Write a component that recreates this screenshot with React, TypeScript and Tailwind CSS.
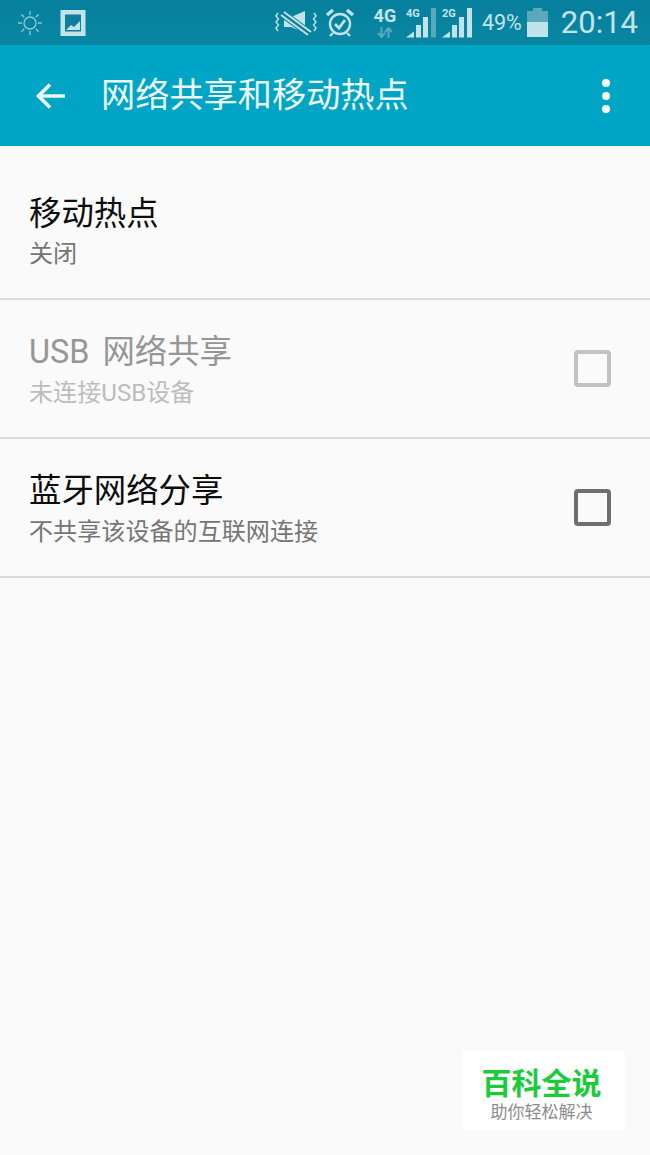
const cjk = "font-['Roboto','Noto_Sans_CJK_SC',sans-serif]";

function Sun() {
  return (
    <svg width="30" height="30" viewBox="0 0 30 30" fill="none" stroke="#8fcbd8" strokeWidth="1.3" strokeLinecap="round">
      <circle cx="15" cy="15" r="6" />
      <path d="M15 3.500v3M15 23.500v3M3.500 15h3M23.500 15h3M6.800 6.800l2 2M21.200 21.200l2 2M6.800 23.200l2-2M21.200 8.800l2-2" />
    </svg>
  );
}

function Picture() {
  return (
    <svg width="26" height="28" viewBox="0 0 26 28">
      <rect x="0.500" y="1" width="25" height="26" fill="#c3e3ea" />
      <rect x="5" y="5.500" width="16" height="17" fill="#0b7f9b" />
      <path d="M6 21l5-5 3 2 6-6v9z" fill="#c3e3ea" />
    </svg>
  );
}

function Mute() {
  return (
    <svg width="44" height="28" viewBox="0 0 44 28" fill="none">
      <path d="M4 4l-2 3 2.500 3-2.500 3 2.500 3-2.500 3 2 3M40 4l2 3-2.500 3 2.500 3-2.500 3 2.500 3-2 3" stroke="#c3e3ea" strokeWidth="1.400" />
      <path d="M10 8h7l14-6v22l-14-6h-7z" fill="#c3e3ea" />
      <path d="M9 5l27 20" stroke="#0b7f9b" strokeWidth="8" />
      <path d="M10 3l27 20M7 6l27 20" stroke="#c3e3ea" strokeWidth="2" />
    </svg>
  );
}

function Alarm() {
  return (
    <svg width="30" height="32" viewBox="0 0 30 32" fill="none" stroke="#c3e3ea" strokeWidth="2.400">
      <circle cx="15" cy="17" r="10" />
      <path d="M10 17l4 4 6-8" strokeWidth="2.800" />
      <path d="M2 8l6-5M28 8l-6-5" strokeWidth="3.400" />
      <path d="M8 26l-3 3M22 26l3 3" />
    </svg>
  );
}

function Signal({ dim }: { dim?: boolean }) {
  return (
    <svg width="30" height="30" viewBox="0 0 30 30">
      <path d="M0 29.500l8-6v6z" fill="#c3e3ea" />
      <rect x="10" y="17" width="5" height="12.500" fill="#c3e3ea" />
      <rect x="17" y="9" width="5" height="20.500" fill="#c3e3ea" />
      <rect x="25" y="0" width="5" height="29.500" fill={dim ? "#5aa8bc" : "#c3e3ea"} />
    </svg>
  );
}

function Arrows() {
  return (
    <svg width="16" height="11" viewBox="0 0 16 11" fill="none" stroke="#5aa8bc" strokeWidth="2">
      <path d="M4.500 0v9M1 6l3.500 4L8 6M11.500 11V2M8 5l3.500-4L15 5" />
    </svg>
  );
}

function Battery() {
  return (
    <svg width="21" height="29" viewBox="0 0 21 29">
      <rect x="6" y="0" width="9" height="4" fill="#5aa8bc" />
      <rect x="0" y="3" width="21" height="12" fill="#5aa8bc" />
      <rect x="0" y="14" width="21" height="15" fill="#c3e3ea" />
    </svg>
  );
}

function StatusBar() {
  return (
    <div className="flex h-[45px] items-center bg-gradient-to-b from-[#067f9c] to-[#0a87a3] pl-[15px] pr-[12px] text-[#c3e3ea]">
      <Sun />
      <div className="ml-[15px]"><Picture /></div>
      <div className="ml-auto"><Mute /></div>
      <div className="ml-[7px]"><Alarm /></div>
      <div className="ml-[17px] flex w-[26px] flex-col items-center">
        <span className="text-[18px] font-bold leading-[15px] font-['Roboto',sans-serif]">4G</span>
        <div className="mt-[4px] flex"><Arrows /></div>
      </div>
      <div className="relative ml-[8px] mt-[1px] h-[30px] w-[30px]">
        <Signal dim />
        <span className="absolute left-[0px] top-[0px] text-[11px] font-bold leading-[12px] font-['Roboto',sans-serif]">4G</span>
      </div>
      <div className="relative ml-[6px] mt-[1px] h-[30px] w-[30px]">
        <Signal />
        <span className="absolute left-[0px] top-[0px] text-[11px] font-bold leading-[12px] font-['Roboto',sans-serif]">2G</span>
      </div>
      <span className="ml-[10px] text-[21.5px] leading-none font-['Roboto',sans-serif]">49%</span>
      <div className="ml-[5px]"><Battery /></div>
      <span className="ml-[13px] text-[31px] leading-none font-['Roboto',sans-serif]">20:14</span>
    </div>
  );
}

function Toolbar() {
  return (
    <div className="flex h-[101px] items-center bg-[#00a5c5] pl-[36px] pr-[40px] text-[#ecf8fa]">
      <svg width="30" height="28" viewBox="0 0 30 28" fill="none" stroke="currentColor" strokeWidth="3.600">
        <path d="M29 14H3M14 2.500L2.500 14 14 25.500" />
      </svg>
      <h1 className="ml-[35px] text-[34.2px] font-normal leading-none">网络共享和移动热点</h1>
      <div className="ml-auto flex flex-col gap-[5px]">
        <span className="h-[8px] w-[8px] rounded-full bg-white" />
        <span className="h-[8px] w-[8px] rounded-full bg-white" />
        <span className="h-[8px] w-[8px] rounded-full bg-white" />
      </div>
    </div>
  );
}

function Row({ title, sub, disabled, check, rowClass, subClass }: { title: string; sub: string; disabled?: boolean; check?: boolean; rowClass: string; subClass: string }) {
  return (
    <div className={`flex items-center border-b-2 border-[#dcdcdc] pl-[29px] pr-[39px] ${rowClass}`}>
      <div className="flex-1">
        <div className={`text-[32.4px] leading-[40px] [word-spacing:5px] ${disabled ? "text-[#969696]" : "text-[#0c0c0c]"}`}>{title}</div>
        <div className={`text-[24.1px] leading-[32px] ${subClass} ${disabled ? "text-[#bdbdbd]" : "text-[#757575]"}`}>{sub}</div>
      </div>
      {check && (
        <div className={`-mt-[4px] h-[37px] w-[37px] rounded-[4px] border-[4px] ${disabled ? "border-[#c2c2c2]" : "border-[#6f6f6f]"}`} />
      )}
    </div>
  );
}

export default function App() {
  return (
    <div className={`relative h-[1155px] w-[650px] overflow-hidden bg-[#fafafa] ${cjk}`}>
      <StatusBar />
      <Toolbar />
      <Row title="移动热点" sub="关闭" rowClass="h-[154px] pt-[20px]" subClass="mt-[4px]" />
      <Row title="USB 网络共享" sub="未连接USB设备" disabled check rowClass="h-[139px] pt-[3px]" subClass="mt-[5px]" />
      <Row title="蓝牙网络分享" sub="不共享该设备的互联网连接" check rowClass="h-[139px] pt-[3px]" subClass="mt-[5px]" />
      <div className="absolute left-[462px] top-[1051px] flex h-[79px] w-[163px] flex-col items-center bg-white pr-[4px] pt-[16px]">
        <div className="text-[30px] font-bold leading-[34px] text-[#1ccb3b]">百科全说</div>
        <div className="mt-[1px] text-[17px] leading-[20px] text-[#8c8c8c]">助你轻松解决</div>
      </div>
    </div>
  );
}
